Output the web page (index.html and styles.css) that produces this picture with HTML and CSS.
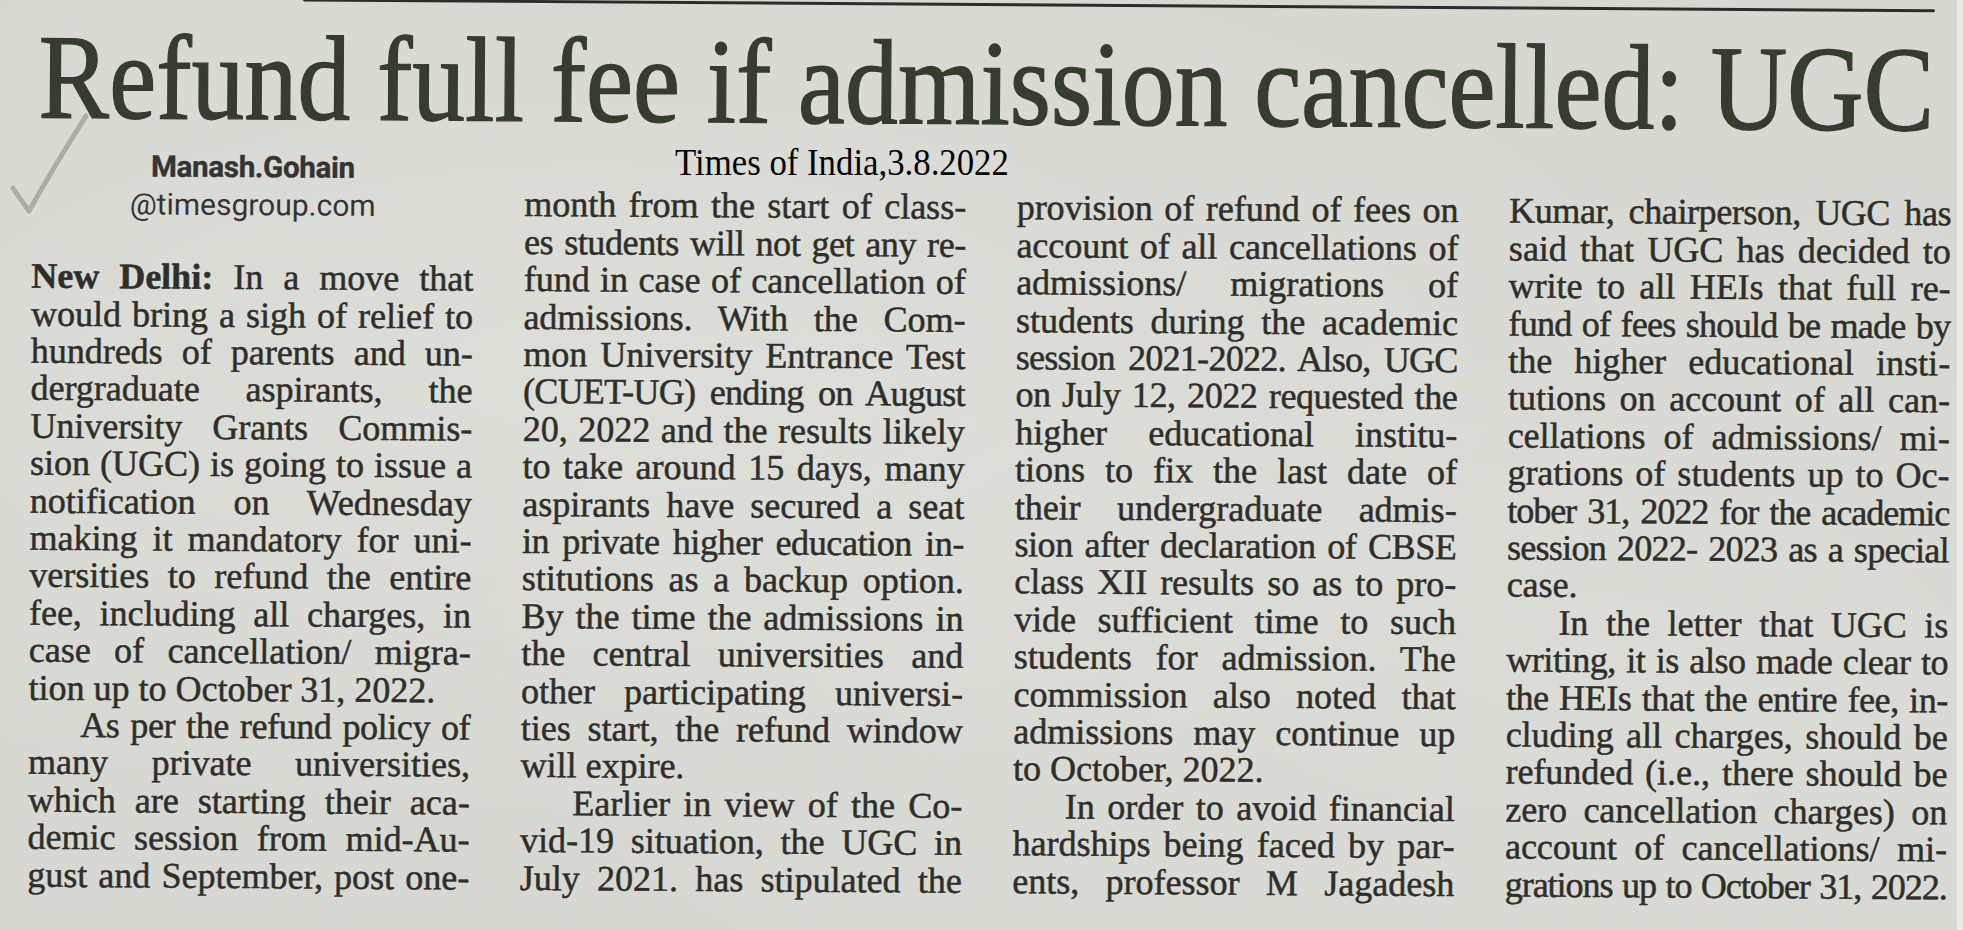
FILE: index.html
```html
<!DOCTYPE html>
<html lang="en">
<head>
<meta charset="utf-8">
<title>Refund full fee if admission cancelled: UGC</title>
<link rel="stylesheet" href="styles.css">
</head>
<body>
<div class="page">
  <div class="rule"></div>
  <h1 class="headline"><span class="headline-text">Refund full fee if admission cancelled: UGC</span></h1>
  <div class="columns">
    <div class="col">
      <div class="byline">
        <div class="byline-name">Manash.Gohain</div>
        <div class="byline-mail">@timesgroup.com</div>
      </div>
      <div class="blank"></div>
      <span class="ln"><b class="dateline">New Delhi:</b> In a move that</span>
      <span class="ln">would bring a sigh of relief to</span>
      <span class="ln">hundreds of parents and un-</span>
      <span class="ln">dergraduate aspirants, the</span>
      <span class="ln">University Grants Commis-</span>
      <span class="ln">sion (UGC) is going to issue a</span>
      <span class="ln">notification on Wednesday</span>
      <span class="ln">making it mandatory for uni-</span>
      <span class="ln">versities to refund the entire</span>
      <span class="ln">fee, including all charges, in</span>
      <span class="ln">case of cancellation/ migra-</span>
      <span class="ln end">tion up to October 31, 2022.</span>
      <span class="ln ind t1">As per the refund policy of</span>
      <span class="ln">many private universities,</span>
      <span class="ln">which are starting their aca-</span>
      <span class="ln">demic session from mid-Au-</span>
      <span class="ln">gust and September, post one-</span>
    </div>
    <div class="col col-cont">
      <span class="ln">month from the start of class-</span>
      <span class="ln t1">es students will not get any re-</span>
      <span class="ln">fund in case of cancellation of</span>
      <span class="ln">admissions. With the Com-</span>
      <span class="ln">mon University Entrance Test</span>
      <span class="ln t2">(CUET-UG) ending on August</span>
      <span class="ln">20, 2022 and the results likely</span>
      <span class="ln">to take around 15 days, many</span>
      <span class="ln">aspirants have secured a seat</span>
      <span class="ln t1">in private higher education in-</span>
      <span class="ln">stitutions as a backup option.</span>
      <span class="ln">By the time the admissions in</span>
      <span class="ln">the central universities and</span>
      <span class="ln">other participating universi-</span>
      <span class="ln">ties start, the refund window</span>
      <span class="ln end">will expire.</span>
      <span class="ln ind">Earlier in view of the Co-</span>
      <span class="ln">vid-19 situation, the UGC in</span>
      <span class="ln">July 2021. has stipulated the</span>
    </div>
    <div class="col col-cont">
      <span class="ln">provision of refund of fees on</span>
      <span class="ln">account of all cancellations of</span>
      <span class="ln">admissions/ migrations of</span>
      <span class="ln">students during the academic</span>
      <span class="ln t2">session 2021-2022. Also, UGC</span>
      <span class="ln t1">on July 12, 2022 requested the</span>
      <span class="ln">higher educational institu-</span>
      <span class="ln">tions to fix the last date of</span>
      <span class="ln">their undergraduate admis-</span>
      <span class="ln t1">sion after declaration of CBSE</span>
      <span class="ln">class XII results so as to pro-</span>
      <span class="ln">vide sufficient time to such</span>
      <span class="ln">students for admission. The</span>
      <span class="ln">commission also noted that</span>
      <span class="ln">admissions may continue up</span>
      <span class="ln end">to October, 2022.</span>
      <span class="ln ind">In order to avoid financial</span>
      <span class="ln">hardships being faced by par-</span>
      <span class="ln">ents, professor M Jagadesh</span>
    </div>
    <div class="col col-cont">
      <span class="ln t1">Kumar, chairperson, UGC has</span>
      <span class="ln">said that UGC has decided to</span>
      <span class="ln">write to all HEIs that full re-</span>
      <span class="ln t2">fund of fees should be made by</span>
      <span class="ln">the higher educational insti-</span>
      <span class="ln">tutions on account of all can-</span>
      <span class="ln">cellations of admissions/ mi-</span>
      <span class="ln">grations of students up to Oc-</span>
      <span class="ln t3">tober 31, 2022 for the academic</span>
      <span class="ln t2">session 2022- 2023 as a special</span>
      <span class="ln end">case.</span>
      <span class="ln ind">In the letter that UGC is</span>
      <span class="ln t1">writing, it is also made clear to</span>
      <span class="ln t1">the HEIs that the entire fee, in-</span>
      <span class="ln">cluding all charges, should be</span>
      <span class="ln">refunded (i.e., there should be</span>
      <span class="ln">zero cancellation charges) on</span>
      <span class="ln">account of cancellations/ mi-</span>
      <span class="ln t3">grations up to October 31, 2022.</span>
    </div>
  </div>
</div>
<svg class="tick" width="110" height="240" viewBox="0 0 110 240" aria-hidden="true">
  <path d="M13 188 Q20 199 29 211 Q53 168 86 116" fill="none" stroke="#a3a4a1" stroke-width="5" stroke-linecap="round" stroke-linejoin="round" opacity="0.85"/>
</svg>
<div class="stamp">Times of India,3.8.2022</div>
</body>
</html>
```

FILE: styles.css
```css
html, body {
  margin: 0;
  padding: 0;
  overflow: hidden;
}

body {
  width: 1963px;
  height: 930px;
  position: relative;
  background-color: #d8d8d2;
  background-image:
    linear-gradient(to left, #ebebe7 0, #ebebe7 6px, rgba(235,235,231,0) 6px),
    radial-gradient(ellipse at 30% 40%, rgba(255,255,255,0.16), rgba(255,255,255,0) 60%),
    radial-gradient(ellipse at 80% 70%, rgba(255,255,255,0.1), rgba(255,255,255,0) 55%);
  color: #2e2f2a;
  font-family: "Liberation Serif", "Times New Roman", serif;
}

.page {
  width: 1963px;
  height: 930px;
  overflow: hidden;
  transform: rotate(0.38deg);
  transform-origin: 981px 465px;
}

.rule {
  margin: 3px 0 0 300px;
  width: 1632px;
  height: 3px;
  background: #2c2d2a;
  border-radius: 2px;
}

.headline {
  margin: 33px 0 0 0;
  padding-left: 36px;
  height: 100px;
  font-family: "Liberation Serif", "Times New Roman", serif;
  font-weight: 400;
  font-size: 106px;
  line-height: 100px;
  white-space: nowrap;
  color: #363c30;
}

.headline-text {
  display: inline-block;
  transform: scaleY(1.14);
  transform-origin: 0 86px;
  -webkit-text-stroke: 1.2px #363c30;
}

.columns {
  display: grid;
  grid-template-columns: repeat(4, 442px);
  column-gap: 50.5px;
  padding-left: 30px;
  margin-top: 13px;
  font-size: 36px;
  line-height: 37.4px;
  align-items: start;
}

.col-cont {
  padding-top: 37.4px;
}

.ln {
  display: block;
  white-space: nowrap;
  text-align: justify;
  text-align-last: justify;
  -webkit-text-stroke: 0.5px #2e2f2a;
}

.ln.end {
  text-align-last: left;
}

.ln.ind {
  text-indent: 52px;
}

.t1 { letter-spacing: -0.4px; }
.t2 { letter-spacing: -0.7px; }
.t3 { letter-spacing: -1px; }

.dateline {
  font-weight: 700;
}

.byline {
  padding-top: 2px;
  text-align: center;
  font-family: Roboto, "Liberation Sans", sans-serif;
  color: #343533;
  line-height: 37.4px;
}

.byline-name {
  font-weight: 700;
  font-size: 29.5px;
  letter-spacing: -0.3px;
  -webkit-text-stroke: 0.4px #343533;
}

.byline-mail {
  font-weight: 400;
  font-size: 30px;
}

.blank {
  height: 35.4px;
}

.tick {
  position: absolute;
  left: 0;
  top: 0;
}

.stamp {
  position: absolute;
  left: 675px;
  top: 143px;
  font-family: "Liberation Serif", "Times New Roman", serif;
  font-size: 38px;
  line-height: 38px;
  color: #000;
  white-space: nowrap;
  transform: scaleX(0.915);
  transform-origin: left top;
}
```
